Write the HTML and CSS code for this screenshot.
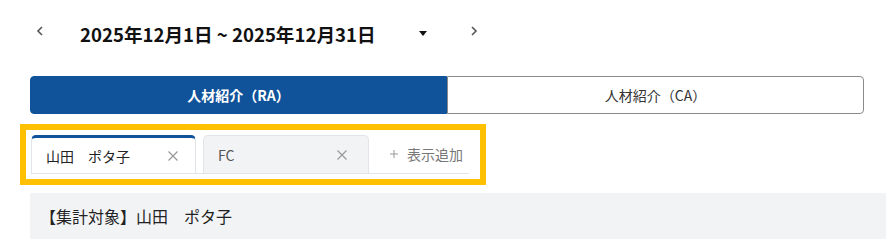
FILE: index.html
```html
<!DOCTYPE html>
<html lang="ja">
<head>
    <meta charset="UTF-8">
    <meta name="viewport" content="width=device-width, initial-scale=1.0">
    <title>集計</title>
    <link rel="stylesheet" href="styles.css">
</head>
<body>
    <div class="page">
        <div class="date-nav">
            <button class="nav-btn">
                <svg width="8" height="10" viewBox="0 0 8 10"><path d="M6 1 L2 5 L6 9" fill="none" stroke="#555" stroke-width="1.6"/></svg>
            </button>
            <div class="date-select">
                <span class="date-text">2025年12月1日 ~ 2025年12月31日</span>
                <span class="caret"></span>
            </div>
            <button class="nav-btn next">
                <svg width="8" height="10" viewBox="0 0 8 10"><path d="M2 1 L6 5 L2 9" fill="none" stroke="#555" stroke-width="1.6"/></svg>
            </button>
        </div>

        <div class="segment">
            <button class="seg active">人材紹介（RA）</button>
            <button class="seg">人材紹介（CA）</button>
        </div>

        <div class="tab-area">
            <div class="tabs">
                <div class="tab active">
                    <span>山田　ポタ子</span>
                    <svg class="close" width="10" height="10" viewBox="0 0 10 10"><path d="M0.5 0.5 L9.5 9.5 M9.5 0.5 L0.5 9.5" stroke="#999" stroke-width="1.2"/></svg>
                </div>
                <div class="tab">
                    <span>FC</span>
                    <svg class="close" width="10" height="10" viewBox="0 0 10 10"><path d="M0.5 0.5 L9.5 9.5 M9.5 0.5 L0.5 9.5" stroke="#999" stroke-width="1.2"/></svg>
                </div>
                <button class="tab-add">
                    <svg width="8" height="8" viewBox="0 0 8 8"><path d="M4 0 V8 M0 4 H8" stroke="#999" stroke-width="1"/></svg>
                    <span>表示追加</span>
                </button>
            </div>
            <div class="highlight"></div>
        </div>

        <div class="summary">【集計対象】山田　ポタ子</div>
    </div>
</body>
</html>
```

FILE: styles.css
```css
:root {
    --primary-blue: #10539a;
    --tab-border: #e1e4e8;
    --light-bg: #f2f3f5;
    --mark-yellow: #ffc000;
}

* {
    margin: 0;
    padding: 0;
    box-sizing: border-box;
    font-family: "Noto Sans CJK JP", "Noto Sans", sans-serif;
}

body {
    background: #fff;
    color: #222;
}

.page {
    padding: 13px 22px 0 30px;
}

button {
    background: none;
    border: none;
    cursor: pointer;
}

/* 期間ナビ */
.date-nav {
    display: flex;
    align-items: center;
    height: 40px;
}

.nav-btn {
    width: 20px;
    height: 20px;
    display: flex;
    align-items: center;
    justify-content: center;
    margin-bottom: 4px;
}

.nav-btn.next {
    margin-left: 26px;
}

.date-select {
    width: 374px;
    margin-left: 14px;
    padding: 0 11px 0 16px;
    display: flex;
    align-items: center;
    justify-content: space-between;
}

.date-text {
    font-size: 18.6px;
    font-weight: 700;
    color: #111;
}

.caret {
    width: 0;
    height: 0;
    border-left: 4px solid transparent;
    border-right: 4px solid transparent;
    border-top: 5px solid #111;
}

/* RA / CA 切替 */
.segment {
    display: flex;
    height: 38px;
    margin-top: 23px;
}

.seg {
    flex: 1;
    font-size: 14px;
    color: #333;
    background: #fff;
    border: 1px solid #8a8a8a;
    border-radius: 0 4px 4px 0;
}

.seg.active {
    background: var(--primary-blue);
    border-color: var(--primary-blue);
    color: #fff;
    font-weight: 700;
    border-radius: 4px 0 0 4px;
}

/* タブ */
.tab-area {
    position: relative;
    margin-top: 21px;
}

.tabs {
    display: flex;
    align-items: flex-end;
    gap: 7px;
    width: 438px;
    margin-left: 1px;
    border-bottom: 1px solid var(--tab-border);
}

.tab {
    width: 166px;
    height: 38px;
    display: flex;
    align-items: center;
    justify-content: space-between;
    padding: 0 21px 0 14px;
    font-size: 14px;
    color: #555;
    background: var(--light-bg);
    border: 1px solid var(--tab-border);
    border-bottom: none;
    border-radius: 5px 5px 0 0;
}

.tab.active {
    width: 165px;
    color: #222;
    background: #fff;
    border-top: 3px solid var(--primary-blue);
    padding-right: 17px;
}

.tab-add {
    height: 38px;
    display: flex;
    align-items: center;
    gap: 9px;
    padding-left: 14px;
    font-size: 14px;
    color: #777;
}

.highlight {
    position: absolute;
    left: -10px;
    top: -11px;
    width: 466px;
    height: 61px;
    border: 6px solid var(--mark-yellow);
    pointer-events: none;
}

/* 集計対象 */
.summary {
    margin: 19px -22px 0 0;
    height: 46px;
    display: flex;
    align-items: center;
    padding-left: 10px;
    font-size: 16px;
    color: #222;
    background: var(--light-bg);
}
```
